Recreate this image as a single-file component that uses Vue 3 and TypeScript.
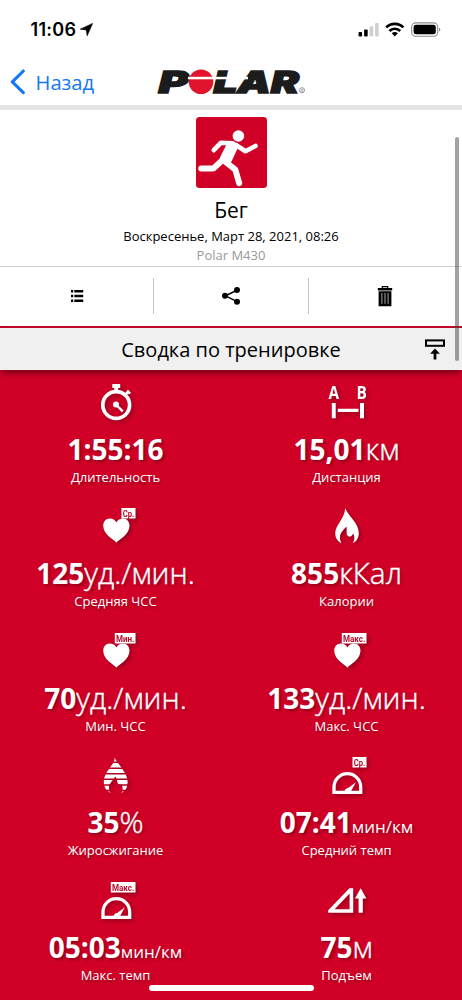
<script setup lang="ts">
type IconKind = 'stopwatch' | 'distance' | 'heart' | 'flame' | 'drop' | 'gauge' | 'ascent'

interface Metric {
  icon: IconKind
  badge?: string
  value: string
  unit?: string
  small?: boolean
  label: string
}

const metrics: Metric[] = [
  { icon: 'stopwatch', value: '1:55:16', label: 'Длительность' },
  { icon: 'distance', value: '15,01', unit: 'км', label: 'Дистанция' },
  { icon: 'heart', badge: 'Ср.', value: '125', unit: 'уд./мин.', label: 'Средняя ЧСС' },
  { icon: 'flame', value: '855', unit: 'кКал', label: 'Калории' },
  { icon: 'heart', badge: 'Мин.', value: '70', unit: 'уд./мин.', label: 'Мин. ЧСС' },
  { icon: 'heart', badge: 'Макс.', value: '133', unit: 'уд./мин.', label: 'Макс. ЧСС' },
  { icon: 'drop', value: '35', unit: '%', label: 'Жиросжигание' },
  { icon: 'gauge', badge: 'Ср.', value: '07:41', unit: 'мин/км', small: true, label: 'Средний темп' },
  { icon: 'gauge', badge: 'Макс.', value: '05:03', unit: 'мин/км', small: true, label: 'Макс. темп' },
  { icon: 'ascent', value: '75', unit: 'м', label: 'Подъем' },
]

const badgeWidths: Record<string, number> = { 'Ср.': 14, 'Мин.': 20.7, 'Макс.': 24.7 }
const badgeWidth = (text: string): number => badgeWidths[text] ?? 20
</script>

<template>
  <div class="phone">
    <header class="status">
      <div class="clock">
        <span>11:06</span>
        <svg width="13" height="13" viewBox="0 0 13 13"><path d="M12.6 0.4 L0.2 6.2 L6.2 6.9 L7.2 12.8 Z" stroke="#000" stroke-width="0.6" stroke-linejoin="round" /></svg>
      </div>
      <svg class="signals" width="84" height="18" viewBox="0 0 84 18">
        <rect x="0.5" y="10" width="3.6" height="4.6" rx="1" />
        <rect x="6.1" y="7.4" width="3.6" height="7.2" rx="1" />
        <rect x="11.6" y="4.2" width="3.6" height="10.4" rx="1" fill="#cfcfcf" />
        <rect x="17.1" y="1" width="3.6" height="13.6" rx="1" fill="#cfcfcf" />
        <g fill="none" stroke="#000" stroke-width="2.7">
          <path d="M28.2 5.4 A12.3 12.3 0 0 1 45.4 5.4" />
          <path d="M31.4 9 A7.6 7.6 0 0 1 42.2 9" />
        </g>
        <path d="M33.7 11.3 A4.4 4.4 0 0 1 39.9 11.3 L36.8 14.6 Z" />
        <rect x="53.7" y="0.9" width="26" height="13.3" rx="4" fill="none" stroke="#8c8c8c" stroke-width="1.1" />
        <rect x="55.6" y="2.8" width="22.2" height="9.5" rx="2.4" />
        <path d="M81.2 5.4 a3 3 0 0 1 0 4.3 Z" fill="#777" />
      </svg>
    </header>

    <nav class="nav">
      <div class="back">
        <svg width="16" height="26" viewBox="0 0 16 26"><path d="M13.3 2 L2.3 12.8 L13.3 23.6" fill="none" stroke="#1478f5" stroke-width="3.1" stroke-linecap="round" stroke-linejoin="round" /></svg>
        <span>Назад</span>
      </div>
      <svg class="logo" width="170" height="44" viewBox="0 0 170 44">
        <g class="wordmark">
          <text x="13.5" y="32.6" textLength="30" lengthAdjust="spacingAndGlyphs">P</text>
          <text x="68.5" y="32.6" textLength="85.5" lengthAdjust="spacingAndGlyphs">LAR</text>
        </g>
        <circle cx="56" cy="21.8" r="12.3" fill="#e2142d" />
        <rect x="43" y="16.8" width="60" height="2.5" fill="#fff" />
        <circle cx="157" cy="30.2" r="2.5" fill="none" stroke="#777" stroke-width="0.8" />
        <text class="reg" x="157" y="31.7" text-anchor="middle">R</text>
      </svg>
    </nav>

    <section class="session">
      <svg class="sport" width="71" height="71" viewBox="0 0 71 71">
        <rect width="71" height="71" rx="3.5" fill="#d10027" />
        <circle cx="42.4" cy="19" r="5.8" fill="#fff" />
        <g fill="none" stroke="#fff" stroke-linecap="round" stroke-linejoin="round">
          <path d="M17.7 33.2 L24.8 25.8 L37 26.2" stroke-width="4.6" />
          <path d="M39.5 27.8 L49.5 34.2 L59.5 29" stroke-width="4.6" />
          <path d="M26.5 43 L17.6 51.4 L5.2 51.4" stroke-width="6" />
          <path d="M29 44.5 L39.3 52.6 L43.2 66.2" stroke-width="6" />
        </g>
        <path d="M29 24 L41 26.3 Q43.2 27.5 42 30.5 L35.5 44.5 Q33 49.3 28 46.5 L24.8 44.5 Q23 42.5 24.2 40 L30.5 27.5 Z" fill="#fff" />
      </svg>
      <h1>Бег</h1>
      <p class="date">Воскресенье, Март 28, 2021, 08:26</p>
      <p class="device">Polar M430</p>
    </section>

    <div class="tools">
      <div class="tool">
        <svg width="14" height="14" viewBox="0 0 14 14">
          <path d="M1 1h2.2v2.6H1z M4.3 1H13.2v2.6H4.3z M1 5.7h2.2v2.6H1z M4.3 5.7H13.2v2.6H4.3z M1 10.4h2.2V13H1z M4.3 10.4H13.2V13H4.3z" />
        </svg>
      </div>
      <div class="tool">
        <svg width="20" height="20" viewBox="0 0 20 20">
          <path d="M16.5 4 L4.5 9.8 L16.5 15.8" fill="none" stroke="#000" stroke-width="1.5" />
          <circle cx="4" cy="9.8" r="3" /><circle cx="16" cy="4" r="3" /><circle cx="16" cy="15.8" r="3" />
        </svg>
      </div>
      <div class="tool">
        <svg width="16" height="22" viewBox="0 0 16 22">
          <path d="M5.3 3 V1.6 H10.7 V3" fill="none" stroke="#000" stroke-width="1.2" />
          <path d="M0.8 2.9 H15.2 V5.6 H0.8 Z M1.6 6.2 H14.4 V21.2 H1.6 Z" />
          <path d="M4.9 8 V18.8 M8 8 V18.8 M11.1 8 V18.8" stroke="#aaa" stroke-width="1" />
        </svg>
      </div>
    </div>

    <div class="summary-bar">
      <h2>Сводка по тренировке</h2>
      <svg class="collapse" width="20" height="21" viewBox="0 0 20 21">
        <rect x="1" y="1.4" width="18" height="5.4" fill="none" stroke="#000" stroke-width="2" />
        <path d="M10 9.6 L14.9 14.8 H11.4 V20.4 H8.6 V14.8 H5.1 Z" />
      </svg>
    </div>

    <main class="grid">
      <div v-for="m in metrics" :key="m.label" class="metric">
        <svg class="icon" width="48" height="44" viewBox="-24 0 48 44">
          <g v-if="m.icon === 'stopwatch'">
            <circle cx="0.2" cy="25" r="13.4" fill="none" stroke="#fff" stroke-width="3.7" />
            <path d="M-3.7 4 H4.2 V8 H2.2 V11 H-1.7 V8 H-3.7 Z" />
            <path d="M9 15 L13.2 10.8 M11.1 10.6 L14.1 13.6" stroke="#fff" stroke-width="2.6" />
            <circle cx="0" cy="24.6" r="3" />
            <path d="M0 24.6 L6.7 31.4" stroke="#fff" stroke-width="2.4" />
          </g>
          <g v-else-if="m.icon === 'distance'">
            <text class="ab" x="-18.6" y="19.4" textLength="10.6" lengthAdjust="spacingAndGlyphs">A</text>
            <text class="ab" x="9.6" y="19.4" textLength="10.4" lengthAdjust="spacingAndGlyphs">B</text>
            <path d="M-15.2 23 h3.9 v15.3 h-3.9 Z M13 23 h4 v15.3 h-4 Z M-9.2 28.8 H11.5 V32 H-9.2 Z" />
          </g>
          <path v-else-if="m.icon === 'heart'" d="M0.4 38.7 C-2 35.5 -12.8 31 -12.8 21.6 C-12.8 17.2 -9.8 14.4 -6.2 14.4 C-3.3 14.4 -0.9 16 0.4 18.4 C1.7 16 4.1 14.4 7 14.4 C10.6 14.4 13.5 17.2 13.5 21.6 C13.5 31 2.8 35.5 0.4 38.7 Z" />
          <path v-else-if="m.icon === 'flame'" d="M-1.8 4 C0.5 11.5 11.8 18.5 11.8 29.2 C11.8 34 9.2 37.5 5.6 39.3 C7.8 36.5 7.8 32.2 6.2 29.4 C5.2 31.7 3.2 33.4 1.2 32.2 C-1.4 30.4 0.3 26.5 -0.6 22.6 C-2.6 25.2 -6.8 28.4 -7.1 33 C-7.2 35.5 -6.5 37.5 -5.4 39.4 C-9 37.8 -11.8 34 -11.8 29.2 C-11.8 21 -2.2 14.5 -1.8 4 Z" />
          <g v-else-if="m.icon === 'drop'">
            <clipPath id="drop-bands"><path d="M-14 3h28v5.6h-28z M-14 10h28v4.4h-28z M-14 15.9h28v4.1h-28z M-14 21.5h28v4.1h-28z M-14 27.1h28v4.1h-28z M-14 32.7h28v4.1h-28z M-14 38.4h28v1.4h-28z" /></clipPath>
            <path clip-path="url(#drop-bands)" d="M-1.2 4.4 C-0.5 8 3.4 10.6 7 17 C10 21 11.6 25 11.6 29 C11.6 34 9.5 38.5 5.4 40 C7.3 37 6.8 34 5.5 31.5 C4 32 1 31 1.2 28 C1.2 26 0.2 24.8 -0.7 23.4 C-1.5 25.5 -5.5 29 -7 33 C-7.5 36 -6.5 38 -5.2 40 C-9.5 38.5 -12.2 34 -12.2 29 C-12.2 24 -9.5 19.5 -7 16 C-3.5 11 -1.5 9 -1.2 4.4 Z" />
          </g>
          <g v-else-if="m.icon === 'gauge'">
            <path d="M-13 39.3 V34 A13.3 13.3 0 0 1 13.7 34 V39.3 Z" fill="none" stroke="#fff" stroke-width="3.3" />
            <path d="M8.9 29.2 L4 38.3 H-2.4 C-2.2 35.6 0 35.4 1.2 35 Z" />
          </g>
          <g v-else>
            <path d="M-18.8 34.8 V32.2 L2.4 10.2 H6.2 V34.8 Z M2.6 15.6 L-12.4 31.2 H2.6 Z" fill-rule="evenodd" />
            <path d="M13.7 10.2 L19.4 20.6 H15.8 V34.8 H11.6 V20.6 H8 Z" />
          </g>
          <g v-if="m.badge">
            <rect :x="19.5 - badgeWidth(m.badge)" y="4" :width="badgeWidth(m.badge)" height="10.5" />
            <text class="badge" :x="20.7 - badgeWidth(m.badge)" y="12.6" :textLength="badgeWidth(m.badge) - 2.4" lengthAdjust="spacingAndGlyphs">{{ m.badge }}</text>
          </g>
        </svg>
        <div class="value"><b>{{ m.value }}</b><span v-if="m.unit" :class="{ small: m.small }">{{ m.unit }}</span></div>
        <div class="label">{{ m.label }}</div>
      </div>
    </main>

    <div class="scrollbar"></div>
    <div class="home"></div>
  </div>
</template>

<style>
body {
  margin: 0;
}
</style>

<style scoped>
.phone {
  position: relative;
  width: 462px;
  height: 1000px;
  overflow: hidden;
  background: #fff;
  color: #000;
  font-family: "Open Sans", "Noto Sans", sans-serif;
}
.status {
  height: 60px;
  box-sizing: border-box;
  padding: 20px 20px 0 30.5px;
  display: flex;
  justify-content: space-between;
}
.clock {
  display: flex;
  align-items: center;
  gap: 4px;
  height: 19px;
  font: 600 18px/19px Inter, sans-serif;
  letter-spacing: 0.3px;
}
.signals {
  margin-top: 1.6px;
}
.nav {
  height: 45px;
  display: flex;
  align-items: flex-start;
  border-bottom: 5px solid #e4e4e4;
}
.back {
  display: flex;
  align-items: center;
  gap: 9.5px;
  width: 135px;
  height: 43px;
  padding-left: 10px;
  color: #1478f5;
  font-size: 20.2px;
}
.wordmark {
  font: italic 900 30px Inter, sans-serif;
  fill: #1c1c1c;
  stroke: #1c1c1c;
  stroke-width: 1.4;
}
.reg {
  font: 4px "Open Sans", sans-serif;
  fill: #777;
}
.session {
  height: 157px;
  box-sizing: border-box;
  padding-top: 7px;
  text-align: center;
  border-bottom: 1px solid #ccc;
}
.sport {
  display: block;
  margin: 0 auto;
}
h1 {
  margin: 7px 0 0;
  font-size: 21px;
  font-weight: 400;
  line-height: 30px;
}
p {
  margin: 0;
}
.date {
  margin-top: 2px;
  font-size: 13px;
  line-height: 19px;
}
.device {
  font-size: 13px;
  line-height: 18px;
  color: #999;
}
.tools {
  display: flex;
  align-items: center;
  height: 59px;
}
.tool {
  flex: 1;
  height: 36px;
  margin-top: -1px;
  display: flex;
  align-items: center;
  justify-content: center;
}
.tool + .tool {
  border-left: 1px solid #c6c6c6;
}
.summary-bar {
  display: flex;
  align-items: center;
  position: relative;
  z-index: 1;
  height: 44px;
  box-sizing: border-box;
  padding: 1px 17px 0 37px;
  border-top: 2px solid #be0828;
  background: #f0f0f0;
  box-shadow: 0 5px 6px -2px rgba(60, 0, 10, 0.6);
}
h2 {
  flex: 1;
  margin: 0;
  font-size: 20px;
  font-weight: 400;
  text-align: center;
}
.grid {
  display: grid;
  grid-template-columns: 1fr 1fr;
  grid-auto-rows: 124.4px;
  height: 630px;
  box-sizing: border-box;
  padding-top: 10px;
  background: #d10027;
  color: #fff;
}
.metric {
  display: flex;
  flex-direction: column;
  align-items: center;
}
.icon {
  fill: #fff;
  filter: drop-shadow(2px 2px 2px rgba(70, 0, 10, 0.45));
}
.ab {
  font: 700 18.5px "Open Sans", sans-serif;
}
.badge {
  font: 700 9.5px Roboto, sans-serif;
  fill: #b50a2a;
}
.value {
  height: 40px;
  margin-top: 5px;
  font-size: 28px;
  line-height: 40px;
  white-space: nowrap;
  text-shadow: 2px 2px 3px rgba(70, 0, 10, 0.45);
}
.value b {
  font-weight: 700;
}
.value span {
  font-size: 29.8px;
  font-weight: 300;
  line-height: 1;
  -webkit-text-stroke: 0.4px #fff;
}
.value .small {
  font-size: 17px;
  font-weight: 400;
  -webkit-text-stroke: 0;
}
.label {
  margin-top: -1px;
  font-size: 13px;
  line-height: 18px;
  text-shadow: 1px 2px 3px rgba(70, 0, 10, 0.45);
}
.scrollbar {
  position: absolute;
  top: 137px;
  left: 455px;
  width: 4px;
  height: 224px;
  border-radius: 2px;
  background: rgba(70, 70, 70, 0.5);
  z-index: 2;
}
.home {
  position: absolute;
  top: 984.5px;
  left: 149px;
  width: 165px;
  height: 6px;
  border-radius: 3px;
  background: #fff;
  z-index: 2;
}
</style>
